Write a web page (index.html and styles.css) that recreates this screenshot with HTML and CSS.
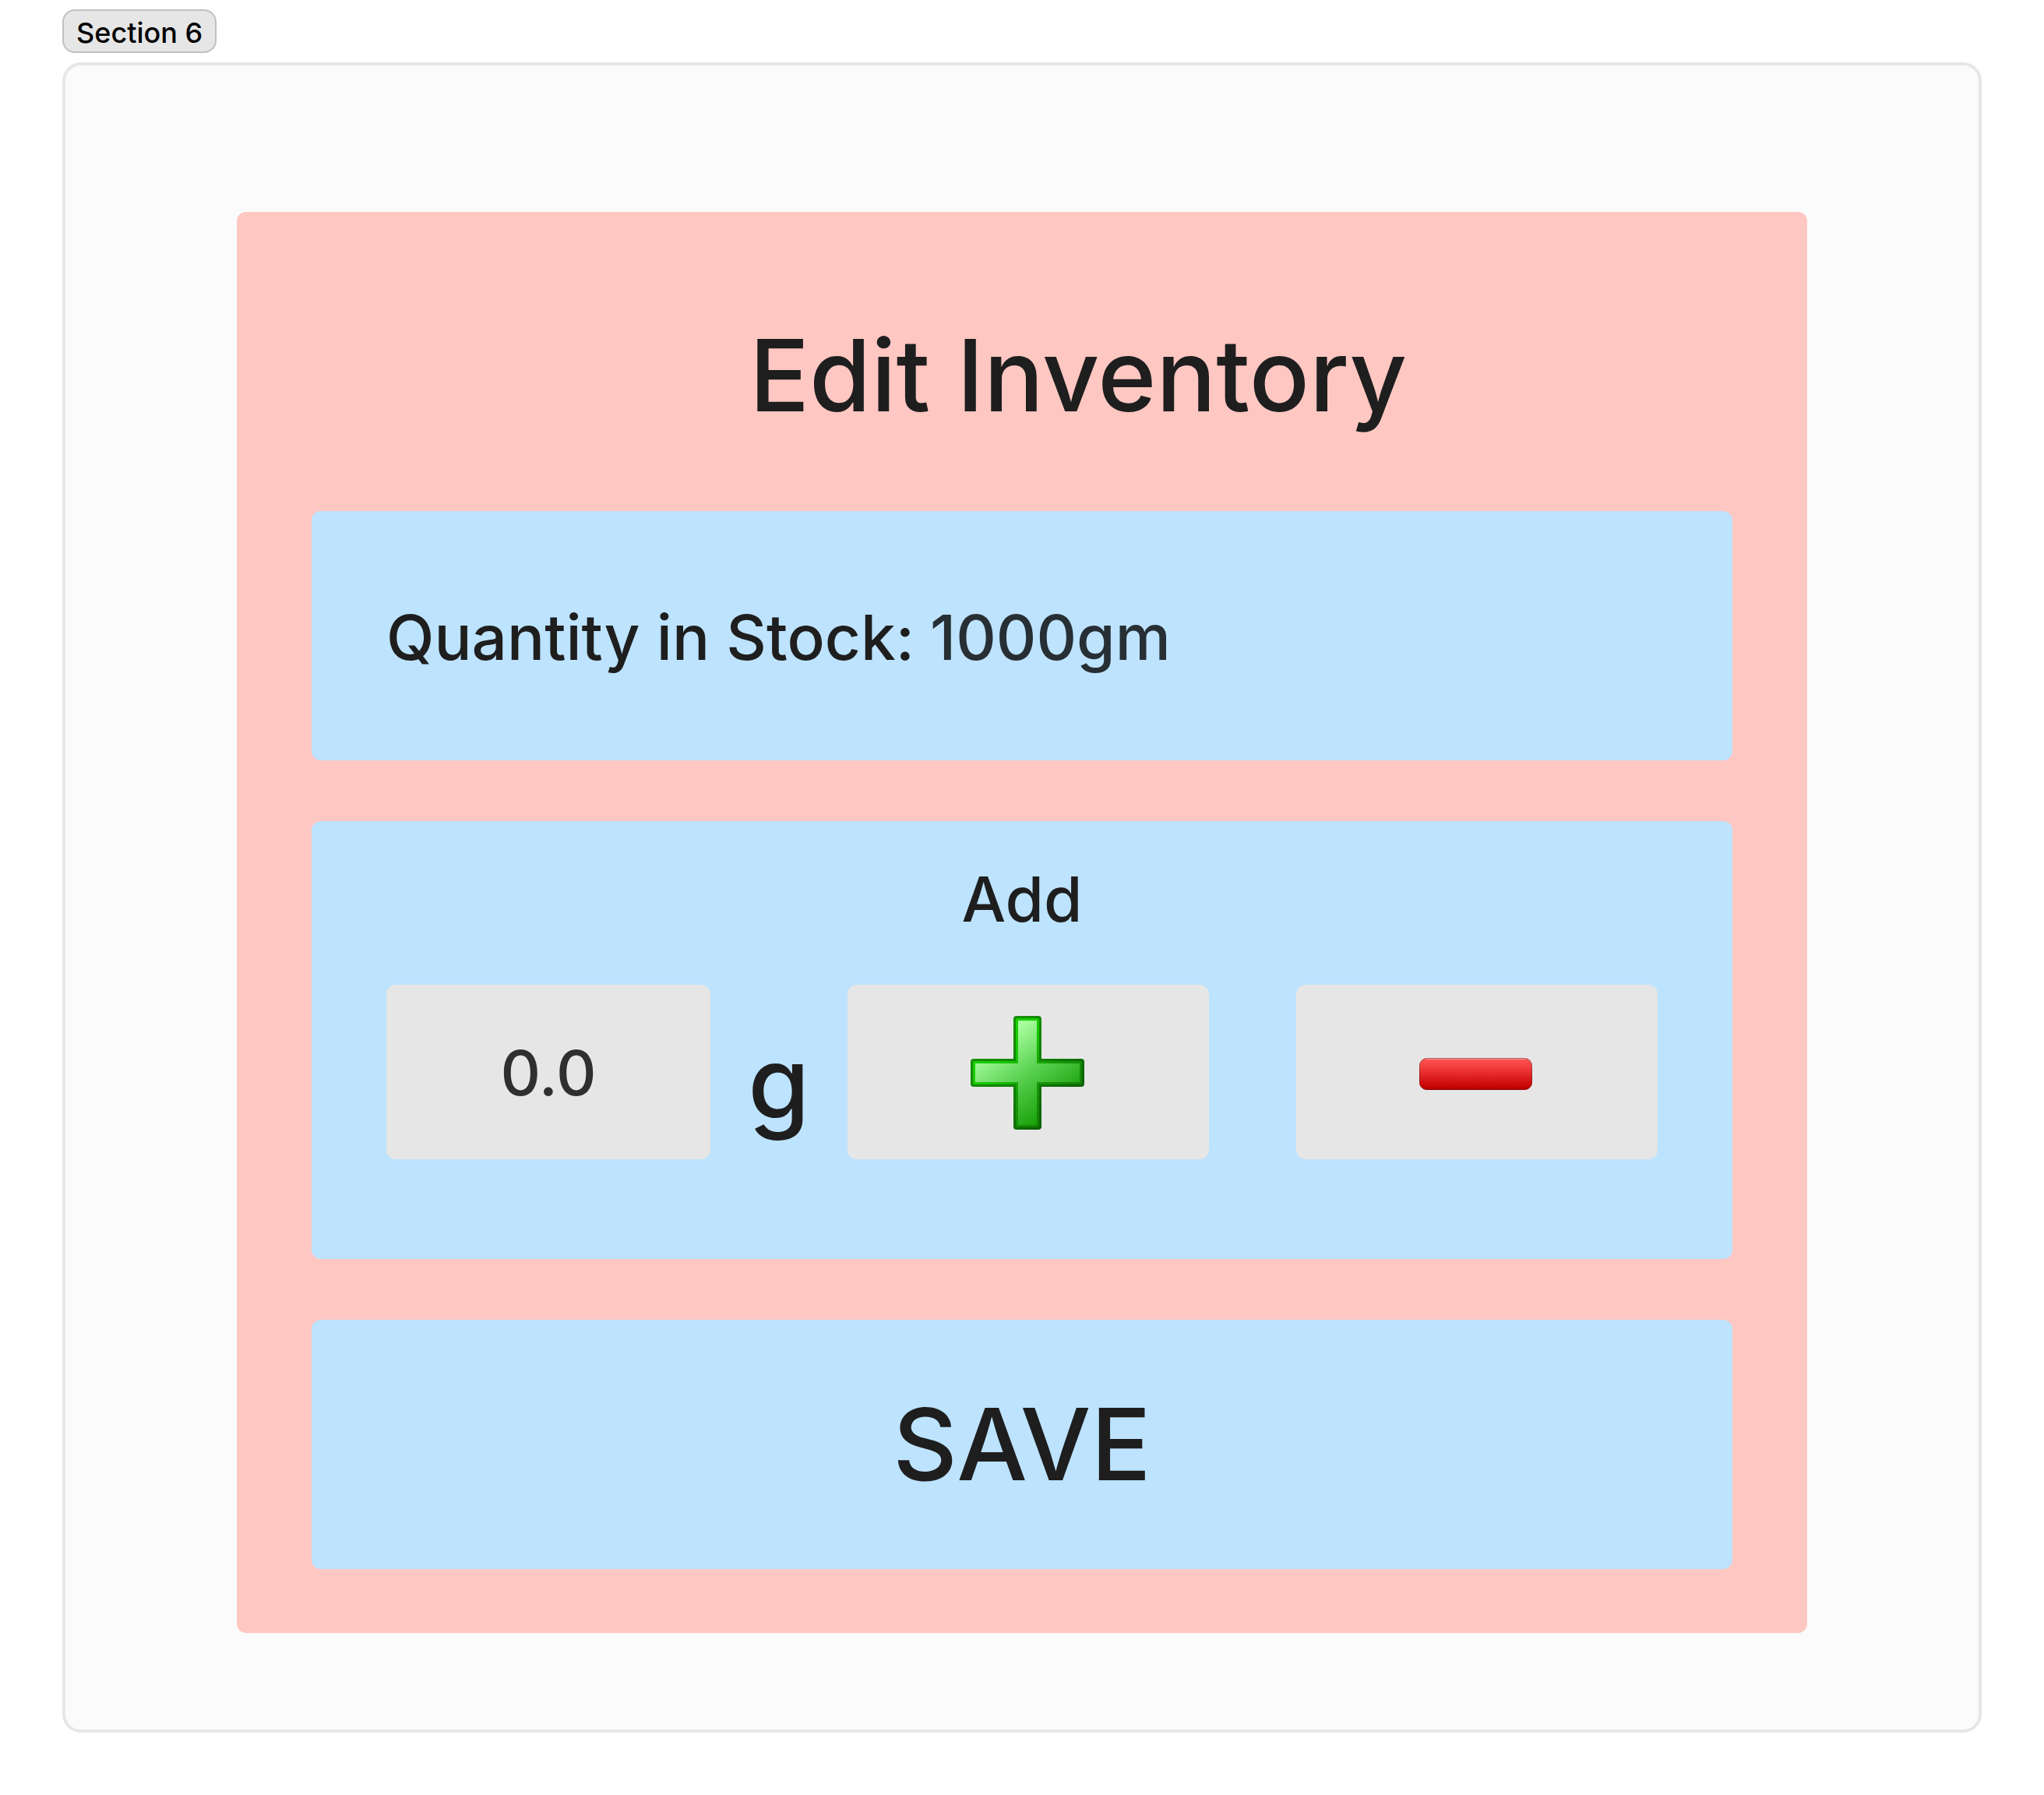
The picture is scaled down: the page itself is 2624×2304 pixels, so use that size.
FILE: index.html
```html
<!DOCTYPE html>
<html lang="en">
<head>
<meta charset="utf-8">
<meta name="viewport" content="width=device-width, initial-scale=1">
<title>Edit Inventory</title>
<link rel="stylesheet" href="styles.css">
</head>
<body>
<main class="board">
  <h2 class="tag">Section 6</h2>
  <section class="section">
    <form class="panel">
      <h1 class="title">Edit Inventory</h1>
      <p class="card stock">
        <span class="stock-label">Quantity in Stock:</span>
        <span class="stock-value">1000gm</span>
      </p>
      <div class="card adjust">
        <label class="adjust-label" for="amount">Add</label>
        <div class="adjust-row">
          <input class="amount" id="amount" type="text" inputmode="decimal" value="0.0">
          <span class="unit">g</span>
          <div class="actions">
            <button class="action" type="button" aria-label="Increase">
              <svg class="icon" viewBox="0 0 146 146" aria-hidden="true">
                <defs>
                  <linearGradient id="plus-edge" gradientUnits="userSpaceOnUse" x1="30" y1="30" x2="116" y2="116">
                    <stop offset="0" stop-color="#158f06"/>
                    <stop offset="0.5" stop-color="#0f8204"/>
                    <stop offset="1" stop-color="#0c6002"/>
                  </linearGradient>
                  <linearGradient id="plus-rim" gradientUnits="userSpaceOnUse" x1="30" y1="30" x2="116" y2="116">
                    <stop offset="0" stop-color="#1bd000"/>
                    <stop offset="0.3" stop-color="#18c400"/>
                    <stop offset="0.6" stop-color="#169a08"/>
                    <stop offset="1" stop-color="#128004"/>
                  </linearGradient>
                  <linearGradient id="plus-fill" gradientUnits="userSpaceOnUse" x1="34" y1="30" x2="104" y2="126">
                    <stop offset="0" stop-color="#adffa3"/>
                    <stop offset="0.45" stop-color="#5fd556"/>
                    <stop offset="1" stop-color="#17a009"/>
                  </linearGradient>
                </defs>
                <path fill="url(#plus-edge)" d="M59 0H87Q91 0 91 4V55H142Q146 55 146 59V87Q146 91 142 91H91V142Q91 146 87 146H59Q55 146 55 142V91H4Q0 91 0 87V59Q0 55 4 55H55V4Q55 0 59 0Z"/>
                <path fill="url(#plus-rim)" d="M60 3H86Q88 3 88 5V58H141Q143 58 143 60V86Q143 88 141 88H88V141Q88 143 86 143H60Q58 143 58 141V88H5Q3 88 3 86V60Q3 58 5 58H58V5Q58 3 60 3Z"/>
                <path fill="url(#plus-fill)" d="M61 6H85V61H140V85H85V140H61V85H6V61H61Z"/>
              </svg>
            </button>
            <button class="action" type="button" aria-label="Decrease">
              <svg class="icon" viewBox="0 0 146 146" aria-hidden="true">
                <defs>
                  <linearGradient id="minus-fill" x1="0" y1="0" x2="0" y2="1">
                    <stop offset="0" stop-color="#ff5353"/>
                    <stop offset="0.25" stop-color="#f64141"/>
                    <stop offset="0.9" stop-color="#c80303"/>
                    <stop offset="1" stop-color="#b00000"/>
                  </linearGradient>
                  <linearGradient id="minus-edge" x1="0" y1="0" x2="0" y2="1">
                    <stop offset="0" stop-color="#a85b5b"/>
                    <stop offset="1" stop-color="#8f0000"/>
                  </linearGradient>
                </defs>
                <rect x="0.500" y="54.500" width="144" height="40" rx="9" fill="url(#minus-fill)" stroke="url(#minus-edge)"/>
                <path d="M9 55.500H136" stroke="#ff9a9a" fill="none"/>
              </svg>
            </button>
          </div>
        </div>
      </div>
      <button class="card save" type="submit">SAVE</button>
    </form>
  </section>
</main>
</body>
</html>
```
FILE: styles.css
```css
* {
  box-sizing: border-box;
}

body {
  margin: 0;
  background: #ffffff;
  color: #1e1e1e;
  font-family: Inter, "Liberation Sans", sans-serif;
  font-weight: 500;
}

h1,
h2,
p {
  margin: 0;
  font-weight: 500;
}

button,
input {
  margin: 0;
  border: 0;
  font: inherit;
  color: inherit;
}

.board {
  padding: 12px 80px 80px;
}

.tag {
  width: fit-content;
  padding: 4px 16px 0;
  border: 2px solid #c0c0c0;
  border-radius: 16px;
  background: #e6e6e6;
  color: #000000;
  font-size: 36px;
  line-height: 48px;
}

.section {
  margin-top: 12px;
  padding: 188px 220px 124px;
  border: 4px solid #e6e6e6;
  border-radius: 24px;
  background: #fbfbfb;
}

.panel {
  display: flex;
  flex-direction: column;
  gap: 78px;
  padding: 130px 96px 82px;
  border-radius: 12px;
  background: #ffc7c2;
}

.title {
  padding-left: 144px;
  margin-bottom: 16px;
  font-size: 128px;
  line-height: 160px;
  text-align: center;
}

.card {
  border-radius: 12px;
  background: #bde3ff;
}

.stock {
  display: flex;
  align-items: center;
  gap: 20px;
  padding: 114px 96px 110px;
  font-size: 80px;
  line-height: 96px;
}

.stock-value {
  color: #272f34;
}

.adjust {
  padding: 52px 96px 128px;
}

.adjust-label {
  display: block;
  font-size: 80px;
  line-height: 96px;
  text-align: center;
}

.adjust-row {
  display: grid;
  grid-template-columns: 416fr 176px 1040fr;
  margin-top: 62px;
}

.amount,
.action {
  width: 100%;
  height: 224px;
  border-radius: 12px;
  background: #e6e6e6;
}

.amount {
  padding: 0;
  color: #2f2f2f;
  font-size: 80px;
  text-align: center;
}

.unit {
  padding-top: 46px;
  font-size: 128px;
  line-height: 160px;
  text-align: center;
}

.actions {
  display: grid;
  grid-template-columns: 1fr 1fr;
  gap: 112px;
}

.action {
  display: flex;
  align-items: center;
  justify-content: center;
  padding: 2px 2px 0 0;
}

.icon {
  display: block;
  width: 146px;
  height: 146px;
}

.save {
  padding: 80px 96px;
  font-size: 128px;
  line-height: 160px;
}
```
